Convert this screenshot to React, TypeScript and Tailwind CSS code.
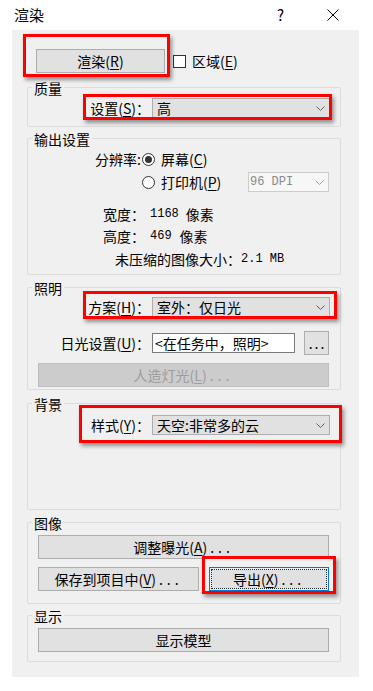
import React from 'react';

const Mn: React.FC<{ c: string }> = ({ c }) => (
  <>
    (<span className="underline underline-offset-[2px]">{c}</span>)
  </>
);

const Dots: React.FC = () => <span className="tracking-[4px] ml-[3px]">...</span>;

const Chevron: React.FC<{ color?: string }> = ({ color = '#606060' }) => (
  <svg width="9" height="5" viewBox="0 0 9 5" className="shrink-0">
    <polyline points="0.5,0.5 4.5,4.5 8.5,0.5" fill="none" stroke={color} strokeWidth="1" />
  </svg>
);

const Combo: React.FC<{ text: string }> = ({ text }) => (
  <div className="w-[178px] h-[20px] bg-[#e1e1e1] border border-[#adadad] flex items-center pl-[4px] pr-[4px]">
    <span className="flex-1 leading-[18px]">{text}</span>
    <Chevron />
  </div>
);

const Group: React.FC<{ title: string; className: string; children?: React.ReactNode }> = ({
  title,
  className,
  children,
}) => (
  <div className={`ml-[15px] w-[314px] border border-[#dcdcdc] rounded-[2px] ${className}`}>
    <div className="-mt-[9px] ml-[4px] w-fit px-[2px] h-[18px] leading-[18px] bg-[#f0f0f0]">{title}</div>
    {children}
  </div>
);

const Btn: React.FC<{ className: string; children: React.ReactNode }> = ({ className, children }) => (
  <div
    className={`h-[24px] bg-[#e1e1e1] border border-[#adadad] flex items-center justify-center leading-[20px] ${className}`}
  >
    {children}
  </div>
);

const Radio: React.FC<{ on?: boolean }> = ({ on }) => (
  <div className="w-[13px] h-[13px] rounded-full border border-[#333333] bg-white flex items-center justify-center shrink-0">
    {on && <div className="w-[7px] h-[7px] rounded-full bg-[#333333]" />}
  </div>
);

const RedBox: React.FC<{ className: string }> = ({ className }) => (
  <div
    className={`absolute border-[3px] border-[#ff0000] shadow-[2px_3px_4px_rgba(0,0,0,0.4)] pointer-events-none ${className}`}
  />
);

const mono = "font-['Liberation_Mono',monospace] text-[12px]";

export default function App() {
  return (
    <div className="relative w-[373px] h-[691px] bg-white text-black text-[14px] font-['Noto_Sans_CJK_SC',sans-serif]">
      {/* title bar */}
      <div className="h-[30px] flex items-center pl-[14px]">
        <span className="text-[15px] leading-[20px]">渲染</span>
        <span className="ml-[233px] text-[15px] leading-[20px]">?</span>
        <svg width="12" height="12" viewBox="0 0 12 12" className="ml-[43px]">
          <line x1="0.5" y1="0.5" x2="11.5" y2="11.5" stroke="#000" strokeWidth="1" />
          <line x1="11.5" y1="0.5" x2="0.5" y2="11.5" stroke="#000" strokeWidth="1" />
        </svg>
      </div>

      {/* dialog body */}
      <div className="ml-[12px] w-[347px] h-[647px] bg-[#f0f0f0] pt-[19px]">
        <div className="flex items-center ml-[24px]">
          <Btn className="w-[129px] h-[23px]">
            渲染<Mn c="R" />
          </Btn>
          <div className="ml-[8px] w-[13px] h-[13px] border border-[#333333] bg-white" />
          <span className="ml-[6px] leading-[20px]">
            区域<Mn c="E" />
          </span>
        </div>

        <Group title="质量" className="mt-[14px] h-[40px]">
          <div className="flex items-center mt-[1px]">
            <div className="w-[122px] text-right leading-[20px]">
              设置<Mn c="S" />：
            </div>
            <div className="ml-[2px]">
              <Combo text="高" />
            </div>
          </div>
        </Group>

        <Group title="输出设置" className="mt-[11px] h-[137px]">
          <div className="flex items-center mt-[1px] h-[20px]">
            <div className="w-[113px] text-right leading-[20px]">分辨率:</div>
            <div className="ml-[1px]">
              <Radio on />
            </div>
            <span className="ml-[6px] leading-[20px]">
              屏幕<Mn c="C" />
            </span>
          </div>
          <div className="flex items-center mt-[3px] h-[20px] pl-[114px]">
            <Radio />
            <span className="ml-[6px] leading-[20px]">
              打印机<Mn c="P" />
            </span>
            <div className="ml-auto mr-[11px] w-[81px] h-[20px] bg-[#f7f7f7] border border-[#cccccc] flex items-center pl-[1px] pr-[4px] text-[#8a8a8a]">
              <span className="flex-1 leading-[18px] font-['Liberation_Mono',monospace] text-[12px]">96 DPI</span>
              <Chevron color="#a0a0a0" />
            </div>
          </div>
          <div className="flex items-center mt-[12px] h-[20px] leading-[20px] pl-[75px]">
            <span>宽度：</span>
            <span className={`ml-[5px] ${mono}`}>1168</span>
            <span className="ml-[7px]">像素</span>
          </div>
          <div className="flex items-center mt-[2px] h-[20px] leading-[20px] pl-[75px]">
            <span>高度：</span>
            <span className={`ml-[5px] ${mono}`}>469</span>
            <span className="ml-[8px]">像素</span>
          </div>
          <div className="flex items-center mt-[3px] h-[20px] leading-[20px] pl-[87px]">
            <span>未压缩的图像大小：</span>
            <span className={mono}>2.1 MB</span>
          </div>
        </Group>

        <Group title="照明" className="mt-[12px] h-[103px]">
          <div className="flex items-center">
            <div className="w-[122px] text-right leading-[20px]">
              方案<Mn c="H" />：
            </div>
            <div className="ml-[2px]">
              <Combo text="室外：仅日光" />
            </div>
          </div>
          <div className="flex items-center mt-[14px]">
            <div className="w-[122px] text-right leading-[20px]">
              日光设置<Mn c="U" />：
            </div>
            <div className="ml-[2px] w-[143px] h-[20px] bg-white border border-[#7a7a7a] pl-[2px] leading-[18px]">
              &lt;在任务中，照明&gt;
            </div>
            <Btn className="ml-[9px] w-[25px] h-[20px]">
              <span className="tracking-[2px] pl-[2px]">...</span>
            </Btn>
          </div>
          <div className="mt-[8px] ml-[10px] w-[291px] h-[24px] bg-[#cccccc] border border-[#bfbfbf] flex items-center justify-center text-[#9d9d9d] leading-[20px]">
            人造灯光<Mn c="L" />
            <Dots />
          </div>
        </Group>

        <Group title="背景" className="mt-[13px] h-[107px]">
          <div className="flex items-center mt-[2px]">
            <div className="w-[122px] text-right leading-[20px]">
              样式<Mn c="Y" />：
            </div>
            <div className="ml-[2px]">
              <Combo text="天空:非常多的云" />
            </div>
          </div>
        </Group>

        <Group title="图像" className="mt-[12px] h-[82px]">
          <Btn className="mt-[3px] ml-[10px] w-[291px]">
            调整曝光<Mn c="A" />
            <Dots />
          </Btn>
          <div className="flex mt-[8px] ml-[10px]">
            <Btn className="w-[161px]">
              保存到项目中<Mn c="V" />
              <Dots />
            </Btn>
            <div className="ml-[10px] w-[120px] h-[24px] bg-[#e5f1fb] border border-[#0078d7] p-[2px]">
              <div className="w-full h-full bg-[#e1e1e1] outline-1 outline-dotted outline-[#222222] flex items-center justify-center leading-[18px]">
                导出<Mn c="X" />
                <Dots />
              </div>
            </div>
          </div>
        </Group>

        <Group title="显示" className="mt-[11px] h-[47px]">
          <Btn className="mt-[3px] ml-[10px] w-[291px] h-[23px]">显示模型</Btn>
        </Group>
      </div>

      {/* annotation boxes */}
      <RedBox className="left-[23px] top-[34px] w-[147px] h-[43px]" />
      <RedBox className="left-[83px] top-[94px] w-[249px] h-[26px]" />
      <RedBox className="left-[83px] top-[291px] w-[254px] h-[28px]" />
      <RedBox className="left-[79px] top-[405px] w-[263px] h-[38px]" />
      <RedBox className="left-[202px] top-[556px] w-[134px] h-[38px]" />
    </div>
  );
}
